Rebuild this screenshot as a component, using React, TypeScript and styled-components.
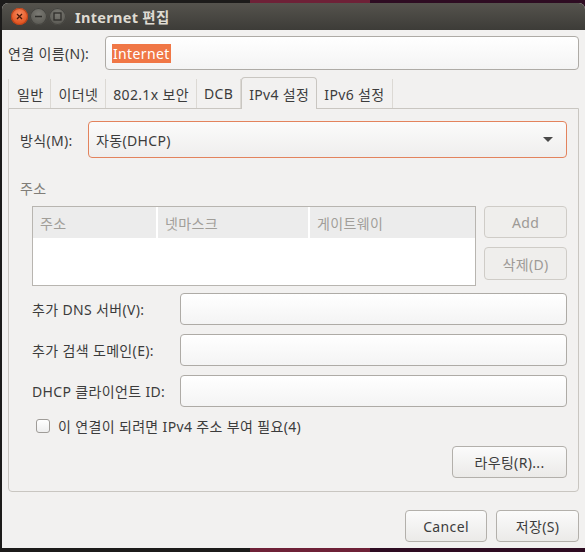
import React from "react";
import styled, { createGlobalStyle, css } from "styled-components";

const Global = createGlobalStyle`
  html, body { margin: 0; padding: 0; }
  body {
    width: 585px;
    height: 552px;
    overflow: hidden;
    background: linear-gradient(to right, #1c1b1a 0 250px, #6e2137 250px 370px, #2e0c22 370px);
    font-family: "Noto Sans", "Noto Sans CJK KR", sans-serif;
    font-size: 14px;
    letter-spacing: 0.35px;
    color: #3c3c3c;
  }
`;

const Window = styled.div`
  margin: 3px 0 0 2px;
  width: 583px;
  height: 545px;
  background: #f2f1f0;
  border-radius: 6px 6px 0 0;
  overflow: hidden;
  display: flex;
  flex-direction: column;
`;

const TitleBar = styled.div`
  height: 27px;
  flex: none;
  display: flex;
  align-items: center;
  padding-left: 9px;
  background: linear-gradient(to bottom, #55534d, #3d3c38);
`;

const Controls = styled.div`
  display: flex;
  gap: 2px;
  margin-right: 9px;
`;

const Circle = styled.div<{ $close?: boolean }>`
  width: 17px;
  height: 17px;
  border-radius: 50%;
  display: flex;
  align-items: center;
  justify-content: center;
  ${(p) =>
    p.$close
      ? css`
          background: radial-gradient(circle at 50% 35%, #f78a5e, #e0531f 70%);
          box-shadow: inset 0 0 0 1px #b9421a;
        `
      : css`
          background: radial-gradient(circle at 50% 35%, #7b7a74, #5d5c56 70%);
          box-shadow: inset 0 0 0 1px #44433f;
        `}
`;

const Title = styled.div`
  color: #dfdbd2;
  font-weight: bold;
  font-size: 14.5px;
  letter-spacing: 0.3px;
`;

const Body = styled.div`
  flex: 1;
  display: flex;
  flex-direction: column;
  padding: 6px 6px 0 6px;
`;

const NameRow = styled.div`
  display: flex;
  align-items: center;
`;

const NameLabel = styled.div`
  width: 97px;
  flex: none;
`;

const Entry = styled.div`
  flex: 1;
  height: 32px;
  box-sizing: border-box;
  border: 1px solid #aeaba6;
  border-radius: 4px;
  background: linear-gradient(to bottom, #ffffff, #f4f4f4);
  display: flex;
  align-items: center;
  padding-left: 6px;
`;

const NameEntry = styled(Entry)`
  height: 34px;
`;

const Selected = styled.span`
  background: #f07746;
  color: #ffffff;
  padding: 0 1px;
  line-height: 19px;
`;

const TabStrip = styled.div`
  display: flex;
  align-items: flex-end;
  margin-top: 7px;
  height: 31px;
`;

const Tab = styled.div<{ $active?: boolean; $first?: boolean }>`
  height: 29px;
  box-sizing: border-box;
  display: flex;
  align-items: center;
  padding: 0 7px 0 ${(p) => (p.$first ? 8 : 7)}px;
  border-right: 1px solid #dcd9d4;
  ${(p) =>
    p.$first &&
    css`
      border-left: 1px solid #dcd9d4;
    `}
  ${(p) =>
    p.$active &&
    css`
      height: 32px;
      margin-bottom: -1px;
      border: 1px solid #c9c6c1;
      border-bottom: none;
      border-radius: 4px 4px 0 0;
      background: #f2f1f0;
      position: relative;
    `}
`;

const Panel = styled.div`
  border: 1px solid #c9c6c1;
  border-radius: 0 0 4px 4px;
  padding: 12px 11px 13px 11px;
  display: flex;
  flex-direction: column;
`;

const MethodRow = styled.div`
  display: flex;
  align-items: center;
`;

const MethodLabel = styled.div`
  width: 68px;
  flex: none;
`;

const Combo = styled.div`
  flex: 1;
  height: 37px;
  box-sizing: border-box;
  border: 1px solid #e3835d;
  border-radius: 4px;
  background: linear-gradient(to bottom, #fbfbfb, #efeeed);
  display: flex;
  align-items: center;
  justify-content: space-between;
  padding: 0 13px 0 7px;
`;

const Arrow = styled.div`
  width: 0;
  height: 0;
  border-left: 5px solid transparent;
  border-right: 5px solid transparent;
  border-top: 5px solid #4a4a4a;
`;

const SectionLabel = styled.div`
  margin-top: 21px;
  color: #807d78;
  line-height: 19px;
`;

const Section = styled.div`
  margin-left: 12px;
  display: flex;
  flex-direction: column;
`;

const TableRow = styled.div`
  margin-top: 8px;
  display: flex;
  gap: 8px;
`;

const Table = styled.div`
  width: 444px;
  height: 80px;
  box-sizing: border-box;
  border: 1px solid #b8b5b0;
  background: #ffffff;
`;

const Header = styled.div`
  display: grid;
  grid-template-columns: 123px 150px 1fr;
  height: 31px;
  column-gap: 2px;
  background: #ffffff;
`;

const HeadCell = styled.div`
  background: #ececec;
  color: #a19e99;
  display: flex;
  align-items: center;
  padding-left: 7px;
`;

const SideButtons = styled.div`
  display: flex;
  flex-direction: column;
  gap: 9px;
`;

const Button = styled.div<{ $w: number; $h?: number; $disabled?: boolean }>`
  width: ${(p) => p.$w}px;
  height: ${(p) => p.$h ?? 32}px;
  box-sizing: border-box;
  border-radius: 4px;
  display: flex;
  align-items: center;
  justify-content: center;
  ${(p) =>
    p.$disabled
      ? css`
          border: 1px solid #cfccc7;
          background: #efeeec;
          color: #9d9a96;
        `
      : css`
          border: 1px solid #b3b0ab;
          background: linear-gradient(to bottom, #fbfbfb, #ebeae8);
          color: #3c3c3c;
        `}
`;

const FieldRows = styled.div`
  margin-top: 7px;
  display: flex;
  flex-direction: column;
  gap: 9px;
`;

const FieldRow = styled.div`
  display: flex;
  align-items: center;
`;

const FieldLabel = styled.div`
  width: 148px;
  flex: none;
`;

const CheckRow = styled.div`
  margin-top: 9px;
  display: flex;
  align-items: center;
  padding-left: 4px;
  gap: 8px;
`;

const Check = styled.div`
  width: 14px;
  height: 14px;
  box-sizing: border-box;
  border: 1px solid #9f9c98;
  border-radius: 3px;
  background: linear-gradient(to bottom, #ffffff, #eeeeee);
`;

const RouteRow = styled.div`
  margin-top: 10px;
  display: flex;
  justify-content: flex-end;
`;

const DialogButtons = styled.div`
  margin-top: 18px;
  display: flex;
  justify-content: flex-end;
  gap: 9px;
`;

export default function App() {
  return (
    <>
      <Global />
      <Window>
        <TitleBar>
          <Controls>
            <Circle $close>
              <svg width="9" height="9" viewBox="0 0 9 9">
                <path d="M2 2 L7 7 M7 2 L2 7" stroke="#4a1a08" strokeWidth="1.3" />
              </svg>
            </Circle>
            <Circle>
              <svg width="9" height="9" viewBox="0 0 9 9">
                <path d="M1 4.5 H8" stroke="#2e2d2a" strokeWidth="1.4" />
              </svg>
            </Circle>
            <Circle>
              <svg width="9" height="9" viewBox="0 0 9 9">
                <rect x="1" y="1" width="7" height="7" fill="none" stroke="#2e2d2a" strokeWidth="1.3" />
              </svg>
            </Circle>
          </Controls>
          <Title>Internet 편집</Title>
        </TitleBar>
        <Body>
          <NameRow>
            <NameLabel>연결 이름(N):</NameLabel>
            <NameEntry>
              <Selected>Internet</Selected>
            </NameEntry>
          </NameRow>
          <TabStrip>
            <Tab $first>일반</Tab>
            <Tab>이더넷</Tab>
            <Tab>802.1x 보안</Tab>
            <Tab>DCB</Tab>
            <Tab $active>IPv4 설정</Tab>
            <Tab>IPv6 설정</Tab>
          </TabStrip>
          <Panel>
            <MethodRow>
              <MethodLabel>방식(M):</MethodLabel>
              <Combo>
                <span>자동(DHCP)</span>
                <Arrow />
              </Combo>
            </MethodRow>
            <SectionLabel>주소</SectionLabel>
            <Section>
              <TableRow>
                <Table>
                  <Header>
                    <HeadCell>주소</HeadCell>
                    <HeadCell>넷마스크</HeadCell>
                    <HeadCell>게이트웨이</HeadCell>
                  </Header>
                </Table>
                <SideButtons>
                  <Button $w={83} $disabled>Add</Button>
                  <Button $w={83} $h={33} $disabled>삭제(D)</Button>
                </SideButtons>
              </TableRow>
              <FieldRows>
                <FieldRow>
                  <FieldLabel>추가 DNS 서버(V):</FieldLabel>
                  <Entry />
                </FieldRow>
                <FieldRow>
                  <FieldLabel>추가 검색 도메인(E):</FieldLabel>
                  <Entry />
                </FieldRow>
                <FieldRow>
                  <FieldLabel>DHCP 클라이언트 ID:</FieldLabel>
                  <Entry />
                </FieldRow>
              </FieldRows>
              <CheckRow>
                <Check />
                <span>이 연결이 되려면 IPv4 주소 부여 필요(4)</span>
              </CheckRow>
              <RouteRow>
                <Button $w={115}>라우팅(R)...</Button>
              </RouteRow>
            </Section>
          </Panel>
          <DialogButtons>
            <Button $w={82}>Cancel</Button>
            <Button $w={83}>저장(S)</Button>
          </DialogButtons>
        </Body>
      </Window>
    </>
  );
}
